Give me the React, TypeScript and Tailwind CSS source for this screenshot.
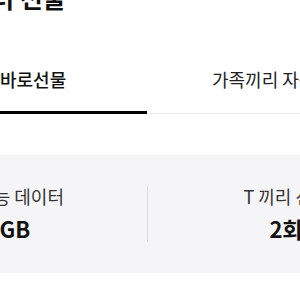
export default function App() {
  const font = { fontFamily: '"Noto Sans CJK KR", "Noto Sans", sans-serif' }
  return (
    <div className="w-[300px] h-[300px] overflow-hidden bg-white relative" style={font}>
      <div className="mt-[-19px] ml-[-55px] whitespace-nowrap text-[25px] leading-[32px] font-bold text-[#111]">데이터 선물</div>

      <div className="flex items-end whitespace-nowrap">
        <div className="w-[147px] shrink-0 pt-[53px] pb-[19px] border-b-[3px] border-black">
          <span className="text-[18px] leading-[26px] font-medium text-[#111]">바로선물</span>
        </div>
        <div className="w-[300px] shrink-0 pl-[65px] pt-[53px] pb-[21px] border-b border-[#ebebeb]">
          <span className="text-[18px] leading-[26px] text-[#222]">가족끼리 자동선물</span>
        </div>
      </div>

      <div className="mt-[41px] h-[118px] bg-[#f5f5f7] flex items-center whitespace-nowrap">
        <div className="w-[298px] shrink-0 ml-[-151px] pl-[8px] flex flex-col items-center gap-[6px] mb-[3px]">
          <span className="text-[18px] leading-[24px] text-[#333]">선물 가능 데이터</span>
          <span className="text-[22px] leading-[28px] font-bold text-[#111]">10GB</span>
        </div>
        <div className="w-px h-[56px] shrink-0 bg-[#dcdcde]" />
        <div className="w-[276px] shrink-0 flex flex-col items-center gap-[6px] mb-[3px]">
          <span className="text-[18px] leading-[24px] text-[#333]">T 끼리 선물</span>
          <span className="text-[22px] leading-[28px] font-bold text-[#111]">2회</span>
        </div>
      </div>
    </div>
  )
}
